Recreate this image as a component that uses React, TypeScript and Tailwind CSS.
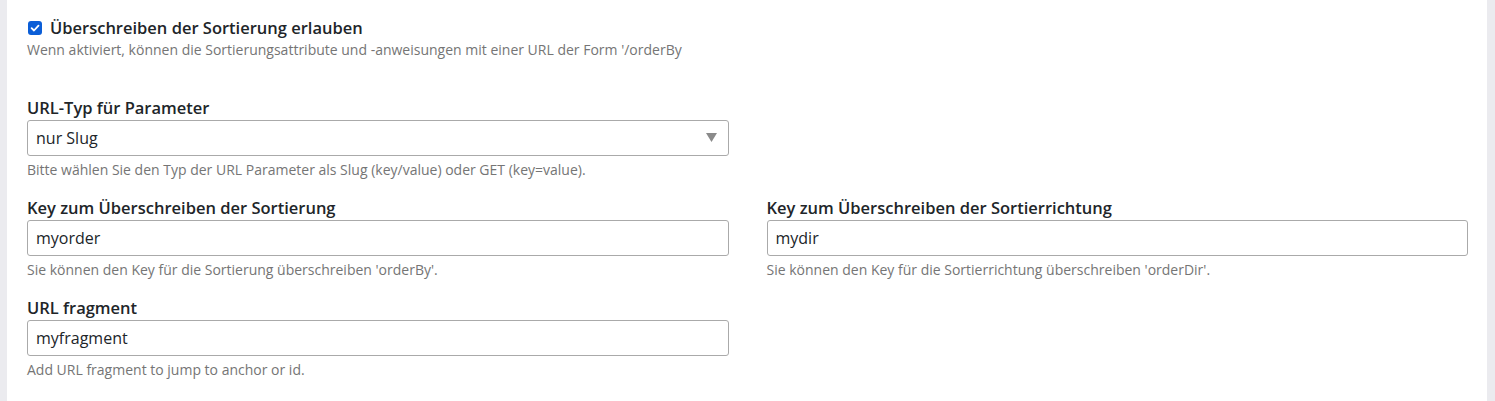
const font = { fontFamily: '"Open Sans", "Noto Sans", sans-serif' }

function Field({ label, value, help, select }: { label: string; value: string; help: string; select?: boolean }) {
  return (
    <div className="flex flex-col">
      <label className="text-[16.5px] leading-[24px] font-semibold text-[#212529]">{label}</label>
      <div className="relative h-[36px] rounded-[3px] border border-[#aaaaaa] bg-white flex items-center pl-[8px]">
        <span className="text-[16px] text-[#212529]">{value}</span>
        {select && (
          <svg className="absolute right-[11px] top-[12px]" width="11" height="9" viewBox="0 0 11 9">
            <path d="M0 0 H11 L5.5 9 Z" fill="#8a8a8a" />
          </svg>
        )}
      </div>
      <p className="mt-[4px] text-[14px] leading-[20px] text-[#757575]">{help}</p>
    </div>
  )
}

export default function App() {
  return (
    <div className="w-[1495px] h-[401px] flex bg-white overflow-hidden" style={font}>
      <div className="w-[7px] bg-[#ebebef] shrink-0" />
      <div className="flex-1 pl-[20px] pr-[19px] pt-[16px]">
        {/* Override toggle */}
        <div className="flex items-center h-[24px]">
          <span className="ml-[1px] w-[14px] h-[14px] rounded-[3px] bg-[#0b5ed7] flex items-center justify-center">
            <svg width="10" height="10" viewBox="0 0 10 10">
              <path d="M1.6 5.2 L4 7.5 L8.5 2.6" stroke="white" strokeWidth="1.8" fill="none" strokeLinecap="round" strokeLinejoin="round" />
            </svg>
          </span>
          <span className="ml-[8px] text-[16.5px] font-semibold text-[#212529]">
            Überschreiben der Sortierung erlauben
          </span>
        </div>
        <p className="text-[14px] leading-[20px] text-[#757575]">
          Wenn aktiviert, können die Sortierungsattribute und -anweisungen mit einer URL der Form '/orderBy
        </p>

        <div className="mt-[36px] grid grid-cols-2 gap-x-[38px] gap-y-[16px]">
          <Field
            label="URL-Typ für Parameter"
            value="nur Slug"
            help="Bitte wählen Sie den Typ der URL Parameter als Slug (key/value) oder GET (key=value)."
            select
          />
          <div />
          <Field
            label="Key zum Überschreiben der Sortierung"
            value="myorder"
            help="Sie können den Key für die Sortierung überschreiben 'orderBy'."
          />
          <Field
            label="Key zum Überschreiben der Sortierrichtung"
            value="mydir"
            help="Sie können den Key für die Sortierrichtung überschreiben 'orderDir'."
          />
          <Field label="URL fragment" value="myfragment" help="Add URL fragment to jump to anchor or id." />
        </div>
      </div>
      <div className="w-[8px] bg-[#ebebef] shrink-0" />
    </div>
  )
}
